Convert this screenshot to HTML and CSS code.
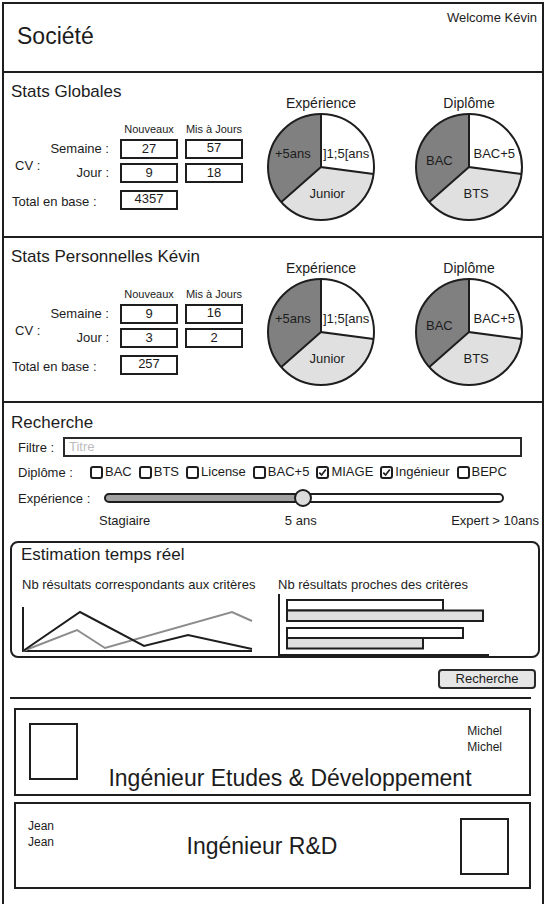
FILE: index.html
```html
<!DOCTYPE html>
<html lang="fr">
<head>
<meta charset="utf-8">
<title>Société</title>
<link rel="stylesheet" href="styles.css">
</head>
<body>
<div class="frame">
  <header class="top">
    <div class="welcome">Welcome Kévin</div>
    <div class="brand">Société</div>
  </header>

  <section class="stats">
    <div class="stats-left">
      <h2 class="sec-title">Stats Globales</h2>
      <div class="cv-grid">
        <span class="colhead c3">Nouveaux</span>
        <span class="colhead c4">Mis à Jours</span>
        <span class="cv">CV :</span>
        <span class="rowlabel r2">Semaine :</span>
        <span class="val c3 r2">27</span>
        <span class="val c4 r2 up">57</span>
        <span class="rowlabel r3">Jour :</span>
        <span class="val c3 r3">9</span>
        <span class="val c4 r3">18</span>
        <span class="total-label">Total en base :</span>
        <span class="val c3 r4 total-val up">4357</span>
      </div>
    </div>
    <div class="pie-block">
      <div class="pie-title">Expérience</div>
      <svg class="pie" width="110" height="110" viewBox="0 0 110 110">
        <path d="M55,55 L55,2 A53,53 0 0 1 107.55,61.92 Z" fill="#fff"/>
        <path d="M55,55 L107.55,61.92 A53,53 0 0 1 15.3,90.12 Z" fill="#e0e0e0"/>
        <path d="M55,55 L15.3,90.12 A53,53 0 0 1 55,2 Z" fill="#808080"/>
        <g class="pie-lines"><circle cx="55" cy="55" r="53"/><path d="M55,2 L55,55 L107.55,61.92 M55,55 L15.3,90.12"/></g>
        <text x="9" y="45.5">+5ans</text>
        <text x="57" y="45.5">]1;5[ans</text>
        <text x="43.5" y="86">Junior</text>
      </svg>
    </div>
    <div class="pie-block pie-second">
      <div class="pie-title">Diplôme</div>
      <svg class="pie" width="110" height="110" viewBox="0 0 110 110">
        <path d="M55,55 L55,2 A53,53 0 0 1 107.55,61.92 Z" fill="#fff"/>
        <path d="M55,55 L107.55,61.92 A53,53 0 0 1 15.3,90.12 Z" fill="#e0e0e0"/>
        <path d="M55,55 L15.3,90.12 A53,53 0 0 1 55,2 Z" fill="#808080"/>
        <g class="pie-lines"><circle cx="55" cy="55" r="53"/><path d="M55,2 L55,55 L107.55,61.92 M55,55 L15.3,90.12"/></g>
        <text x="12" y="52.5">BAC</text>
        <text x="59.5" y="45.5">BAC+5</text>
        <text x="49.5" y="86">BTS</text>
      </svg>
    </div>
  </section>

  <section class="stats">
    <div class="stats-left">
      <h2 class="sec-title">Stats Personnelles Kévin</h2>
      <div class="cv-grid">
        <span class="colhead c3">Nouveaux</span>
        <span class="colhead c4">Mis à Jours</span>
        <span class="cv">CV :</span>
        <span class="rowlabel r2">Semaine :</span>
        <span class="val c3 r2">9</span>
        <span class="val c4 r2 up">16</span>
        <span class="rowlabel r3">Jour :</span>
        <span class="val c3 r3">3</span>
        <span class="val c4 r3">2</span>
        <span class="total-label">Total en base :</span>
        <span class="val c3 r4 total-val up">257</span>
      </div>
    </div>
    <div class="pie-block">
      <div class="pie-title">Expérience</div>
      <svg class="pie" width="110" height="110" viewBox="0 0 110 110">
        <path d="M55,55 L55,2 A53,53 0 0 1 107.55,61.92 Z" fill="#fff"/>
        <path d="M55,55 L107.55,61.92 A53,53 0 0 1 15.3,90.12 Z" fill="#e0e0e0"/>
        <path d="M55,55 L15.3,90.12 A53,53 0 0 1 55,2 Z" fill="#808080"/>
        <g class="pie-lines"><circle cx="55" cy="55" r="53"/><path d="M55,2 L55,55 L107.55,61.92 M55,55 L15.3,90.12"/></g>
        <text x="9" y="45.5">+5ans</text>
        <text x="57" y="45.5">]1;5[ans</text>
        <text x="43.5" y="86">Junior</text>
      </svg>
    </div>
    <div class="pie-block pie-second">
      <div class="pie-title">Diplôme</div>
      <svg class="pie" width="110" height="110" viewBox="0 0 110 110">
        <path d="M55,55 L55,2 A53,53 0 0 1 107.55,61.92 Z" fill="#fff"/>
        <path d="M55,55 L107.55,61.92 A53,53 0 0 1 15.3,90.12 Z" fill="#e0e0e0"/>
        <path d="M55,55 L15.3,90.12 A53,53 0 0 1 55,2 Z" fill="#808080"/>
        <g class="pie-lines"><circle cx="55" cy="55" r="53"/><path d="M55,2 L55,55 L107.55,61.92 M55,55 L15.3,90.12"/></g>
        <text x="12" y="52.5">BAC</text>
        <text x="59.5" y="45.5">BAC+5</text>
        <text x="49.5" y="86">BTS</text>
      </svg>
    </div>
  </section>

  <section class="search">
    <h2 class="sec-title">Recherche</h2>
    <div class="row filter-row">
      <span class="lbl lbl-filtre">Filtre :</span>
      <div class="input"><span class="placeholder">Titre</span></div>
    </div>
    <div class="row diplome-row">
      <span class="lbl lbl-diplome">Diplôme :</span>
      <div class="checks">
        <span class="check"><span class="cb"></span>BAC</span>
        <span class="check"><span class="cb"></span>BTS</span>
        <span class="check"><span class="cb"></span>License</span>
        <span class="check"><span class="cb"></span>BAC+5</span>
        <span class="check"><span class="cb"><svg width="9" height="9" viewBox="0 0 9 9"><path d="M1.3 4.6 L3.6 7 L7.8 1.6"/></svg></span>MIAGE</span>
        <span class="check"><span class="cb"><svg width="9" height="9" viewBox="0 0 9 9"><path d="M1.3 4.6 L3.6 7 L7.8 1.6"/></svg></span>Ingénieur</span>
        <span class="check"><span class="cb"></span>BEPC</span>
      </div>
    </div>
    <div class="row exp-row">
      <span class="lbl lbl-exp">Expérience :</span>
      <div class="slider">
        <div class="track"></div>
        <div class="thumb"></div>
      </div>
    </div>
    <div class="scale">
      <span>Stagiaire</span>
      <span>5 ans</span>
      <span>Expert &gt; 10ans</span>
    </div>

    <div class="estimation">
      <h3 class="est-title">Estimation temps réel</h3>
      <div class="est-cols">
        <div class="est-col">
          <div class="est-sub">Nb résultats correspondants aux critères</div>
          <svg class="chart" width="234" height="62" viewBox="0 0 234 62">
            <path class="axis" d="M2,13 L2,57 L231,57"/>
            <polyline class="l-gray" points="2,57 56,36 84,54 211,18 231,27"/>
            <polyline class="l-black" points="2,57 59,18 123,52 167,41 231,55"/>
          </svg>
        </div>
        <div class="est-col">
          <div class="est-sub">Nb résultats proches des critères</div>
          <svg class="chart" width="214" height="62" viewBox="0 0 214 62">
            <rect class="bar" x="10" y="6" width="156" height="10.5" fill="#fff"/>
            <rect class="bar" x="10" y="16.5" width="196" height="10.5" fill="#e0e0e0"/>
            <rect class="bar" x="10" y="34" width="176" height="10" fill="#fff"/>
            <rect class="bar" x="10" y="44" width="136" height="10.5" fill="#e0e0e0"/>
            <path class="axis" d="M2,0 L2,61 L212,61"/>
          </svg>
        </div>
      </div>
    </div>

    <div class="btn-row"><button class="btn" type="button">Recherche</button></div>
    <div class="sep"></div>

    <div class="card card-one">
      <div class="photo"></div>
      <div class="name name-right">Michel<br>Michel</div>
      <div class="job job-one">Ingénieur Etudes &amp; Développement</div>
    </div>
    <div class="card card-two">
      <div class="name name-left">Jean<br>Jean</div>
      <div class="job job-two">Ingénieur R&amp;D</div>
      <div class="photo"></div>
    </div>
  </section>
</div>
</body>
</html>
```
FILE: styles.css
```css
* { box-sizing: border-box; }
html, body { margin: 0; padding: 0; background: #fff; }
body {
  height: 904px;
  overflow: hidden;
  font-family: "Liberation Sans", Arial, sans-serif;
  color: #1c1c1c;
  font-size: 13px;
}
.frame {
  margin: 2px 0 0 2px;
  width: 542px;
  height: 1000px;
  border: 2px solid #1e1e1e;
}

/* header */
.top {
  height: 69px;
  border-bottom: 2px solid #1e1e1e;
  padding: 6px 5px 0 13px;
  display: flex;
  flex-direction: column;
}
.welcome { align-self: flex-end; font-size: 13px; line-height: 15px; }
.brand { font-size: 23px; line-height: 26px; margin-top: -2px; }

/* stats */
.stats {
  height: 165px;
  border-bottom: 2px solid #1e1e1e;
  display: flex;
}
.stats-left { width: 262px; padding: 9px 0 0 7px; }
.sec-title { margin: 0; font-size: 17px; line-height: 20px; font-weight: normal; }
.cv-grid {
  margin-top: 21px;
  display: grid;
  grid-template-columns: 38px 71px 65px 58px;
  grid-template-rows: 12px 20px 20px 23px;
  row-gap: 4px;
}
.colhead { grid-row: 1; font-size: 11px; line-height: 12px; text-align: center; width: 58px; }
.c3 { grid-column: 3; }
.c4 { grid-column: 4; }
.r2 { grid-row: 2; }
.r3 { grid-row: 3; }
.r4 { grid-row: 4; }
.cv { grid-column: 1; grid-row: 2 / 4; align-self: center; padding: 10px 0 0 4px; line-height: 16px; }
.rowlabel { grid-column: 2; text-align: right; padding-right: 11px; line-height: 20px; }
.val {
  width: 58px;
  height: 20px;
  border: 2px solid #1e1e1e;
  text-align: center;
  line-height: 16px;
}
.up { line-height: 13px; }
.total-label { grid-column: 1 / 3; grid-row: 4; align-self: end; line-height: 16px; padding-left: 1px; }
.total-val { align-self: end; }

.pie-block {
  width: 110px;
  padding-top: 22px;
  display: flex;
  flex-direction: column;
  align-items: center;
}
.pie-second { margin-left: 38px; }
.pie-title { font-size: 14px; line-height: 16px; }
.pie { margin-top: 1px; display: block; }
.pie-lines circle, .pie-lines path { fill: none; stroke: #1e1e1e; stroke-width: 2; }
.pie text { font-family: "Liberation Sans", Arial, sans-serif; font-size: 13px; fill: #1c1c1c; }

/* search */
.search { padding-top: 10px; }
.search > .sec-title { padding-left: 7px; }
.row { display: flex; align-items: center; padding-left: 14px; }
.lbl { flex: none; }
.filter-row { margin-top: 4px; height: 20px; }
.lbl-filtre { width: 45px; }
.input {
  width: 459px;
  height: 20px;
  border: 2px solid #2a2a2a;
  padding-left: 4px;
  line-height: 16px;
}
.placeholder { color: #bdbdbd; }
.diplome-row { margin-top: 7px; height: 16px; }
.lbl-diplome { width: 72px; }
.checks { display: flex; gap: 7px; }
.check { display: flex; align-items: center; gap: 2px; line-height: 16px; }
.cb {
  width: 13px;
  height: 13px;
  border: 2px solid #1e1e1e;
  border-radius: 3px;
  display: flex;
  align-items: center;
  justify-content: center;
}
.cb svg { display: block; }
.cb path { fill: none; stroke: #1e1e1e; stroke-width: 1.7; }
.exp-row { margin-top: 8px; height: 20px; }
.lbl-exp { width: 86px; }
.slider { position: relative; width: 400px; height: 20px; }
.track {
  position: absolute;
  left: 0; right: 0; top: 5px;
  height: 10px;
  border: 2px solid #1e1e1e;
  border-radius: 5px;
  background: linear-gradient(to right, #a0a0a0 0, #a0a0a0 50%, #fff 50%);
}
.thumb {
  position: absolute;
  left: 190px; top: 1px;
  width: 18px; height: 18px;
  border: 2px solid #1e1e1e;
  border-radius: 50%;
  background: #dcdcdc;
}
.scale {
  margin-top: 5px;
  padding: 0 3px 0 95px;
  display: flex;
  justify-content: space-between;
  line-height: 16px;
}

.estimation {
  margin: 12px 2px 0 6px;
  border: 2px solid #1e1e1e;
  border-radius: 8px;
  padding: 2px 0 0 9px;
}
.est-title { margin: 0; font-size: 17px; line-height: 20px; font-weight: normal; }
.est-cols { display: grid; grid-template-columns: 256px 1fr; margin-top: 12px; }
.est-sub { line-height: 15px; padding-left: 1px; }
.chart { display: block; margin-top: 2px; }
.axis { fill: none; stroke: #1e1e1e; stroke-width: 2; }
.l-black { fill: none; stroke: #1e1e1e; stroke-width: 2; }
.l-gray { fill: none; stroke: #8c8c8c; stroke-width: 2; }
.bar { stroke: #1e1e1e; stroke-width: 2; }

.btn-row { display: flex; justify-content: flex-end; margin-top: 11px; padding-right: 6px; }
.btn {
  width: 98px;
  height: 20px;
  padding: 0;
  font-family: "Liberation Sans", Arial, sans-serif;
  font-size: 13px;
  color: #1c1c1c;
  background: #e6e6e6;
  border: 2px solid #2a2a2a;
  border-radius: 4px;
  line-height: 16px;
}
.sep { margin: 8px 11px 0 6px; height: 2px; background: #1e1e1e; }

.card {
  margin: 9px 11px 0 10px;
  border: 2px solid #1e1e1e;
  display: grid;
}
.photo { width: 49px; height: 57px; border: 2px solid #1e1e1e; }
.name { font-size: 12px; line-height: 16px; }
.job { font-size: 23px; line-height: 26px; }
.card-one {
  height: 88px;
  padding: 13px 27px 0 13px;
  grid-template-columns: 49px 1fr;
  grid-template-rows: auto auto;
}
.card-one .photo { grid-column: 1; grid-row: 1 / 3; }
.name-right { grid-column: 2; grid-row: 1; justify-self: end; }
.job-one { grid-column: 2; grid-row: 2; justify-self: center; margin-top: 6px; }
.card-two {
  height: 87px;
  margin-top: 6px;
  padding: 14px 20px 0 12px;
  grid-template-columns: 1fr 49px;
  column-gap: 21px;
}
.card-two .photo { grid-column: 2; grid-row: 1; }
.name-left { grid-column: 1; grid-row: 1; justify-self: start; align-self: start; }
.job-two { grid-column: 1 / 3; grid-row: 1; justify-self: center; align-self: start; margin: 15px 13px 0 0; }
```
